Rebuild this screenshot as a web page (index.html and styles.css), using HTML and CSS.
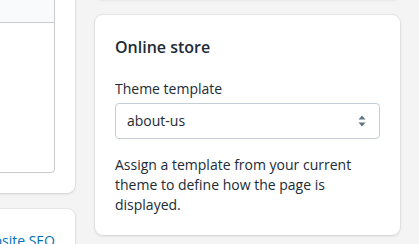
FILE: index.html
```html
<!DOCTYPE html>
<html lang="en">
<head>
    <meta charset="UTF-8">
    <meta name="viewport" content="width=device-width, initial-scale=1.0">
    <title>Page settings</title>
    <link rel="stylesheet" href="styles.css">
</head>
<body>

    <div class="layout">

        <!-- Main column -->
        <div class="main">
            <div class="card card-editor">
                <div class="editor">
                    <div class="editor-toolbar"></div>
                    <div class="editor-body"></div>
                </div>
            </div>

            <div class="card card-seo">
                <a href="#" class="link">Edit website SEO</a>
            </div>
        </div>

        <!-- Sidebar -->
        <div class="side">
            <div class="card card-prev"></div>

            <div class="card">
                <h2>Online store</h2>
                <div class="form-group">
                    <label for="template">Theme template</label>
                    <div class="select">
                        <select id="template" name="template">
                            <option>about-us</option>
                            <option>page</option>
                            <option>contact</option>
                        </select>
                        <svg class="select-icon" viewBox="0 0 20 20" width="20" height="20">
                            <path d="M10 4.5l3.5 4h-7zM10 15.5l-3.5-4h7z"></path>
                        </svg>
                    </div>
                </div>
                <p class="help">Assign a template from your current theme to define how the page is displayed.</p>
            </div>
        </div>
    </div>

</body>
</html>
```

FILE: styles.css
```css
body {
    font-family: "Open Sans", "Liberation Sans", sans-serif;
    font-size: 14px;
    line-height: 20px;
    color: #212b36;
    margin: 0;
    padding: 0;
    background-color: #f4f4f4;
    overflow: hidden;
}
.layout {
    display: grid;
    grid-template-columns: 475px 305px;
    align-items: start;
    gap: 20px;
    margin-left: -400px;
}
.main, .side {
    display: flex;
    flex-direction: column;
    gap: 16px;
}
.card {
    background: #fff;
    border-radius: 8px;
    box-shadow: 0 0 0 1px rgba(63, 63, 68, 0.05), 0 1px 3px 0 rgba(63, 63, 68, 0.15);
    padding: 20px;
}
.card-prev {
    height: 60px;
    margin-top: -61px;
    padding: 0;
}
.card-editor {
    margin-top: -60px;
}
.card-seo {
    padding-top: 22px;
}
.editor {
    border: 1px solid #c9cccf;
    border-radius: 4px;
}
.editor-toolbar {
    height: 61px;
    background: #f9fafb;
    border-bottom: 1px solid #c9cccf;
    border-radius: 4px 4px 0 0;
}
.editor-body {
    height: 149px;
}
.link {
    color: #006fbb;
    text-decoration: none;
    display: block;
    text-align: right;
}
h2 {
    font-size: 16px;
    font-weight: 600;
    line-height: 24px;
    margin: 0 0 20px;
}
.form-group label {
    display: block;
    margin-bottom: 4px;
}
.select {
    position: relative;
}
.select select {
    width: 100%;
    height: 36px;
    padding: 0 36px 0 11px;
    border: 1px solid #c4cdd5;
    border-radius: 4px;
    background: #fff;
    font: inherit;
    color: #212b36;
    appearance: none;
}
.select-icon {
    position: absolute;
    right: 8px;
    top: 8px;
    fill: #637381;
    pointer-events: none;
}
.help {
    margin: 16px 0 0;
}
```
